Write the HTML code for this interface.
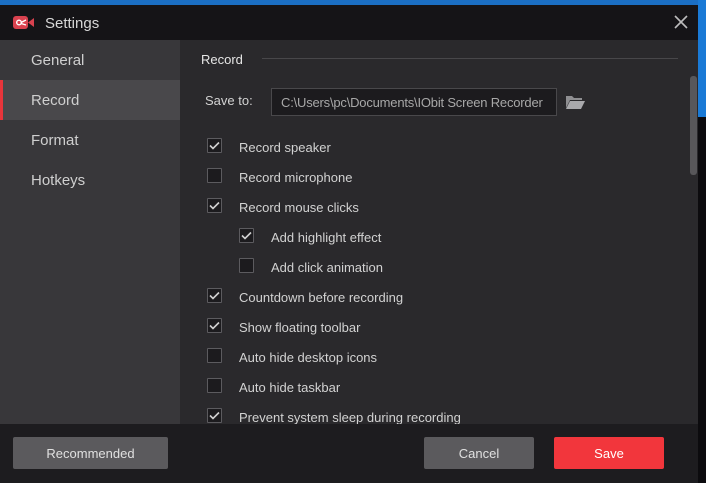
<!DOCTYPE html>
<html><head><meta charset="utf-8"><style>
*{margin:0;padding:0;box-sizing:border-box}
body{width:706px;height:483px;overflow:hidden;background:#0c0b0e;font-family:"Liberation Sans",sans-serif;position:relative}
.abs{position:absolute}
.cb{position:absolute;width:15px;height:15px;border:1px solid #5c5b5f;background:#1c1b1e;border-radius:1px}
.lbl{position:absolute;font-size:13px;color:#d2d2d2;white-space:nowrap}
.nav{position:absolute;left:31px;font-size:15px;color:#cfcfcf}
.btn{position:absolute;height:32px;top:437px;font-size:13px;color:#e0e0e0;text-align:center;line-height:33px;border-radius:2px}
</style></head><body>
<div class="abs" style="left:0;top:0;width:706px;height:5px;background:#1b6fc4"></div>
<div class="abs" style="left:698px;top:0;width:8px;height:117px;background:#1a7ad6"></div>
<div class="abs" style="left:0;top:5px;width:698px;height:35px;background:#151417"></div>
<svg class="abs" style="left:13px;top:15px" width="22" height="15" viewBox="0 0 22 15"><rect x="0" y="1" width="15" height="13" rx="3" fill="#d9424f"/><path d="M15 7.5 L21 3 L21 12 Z" fill="#d9424f"/><circle cx="6" cy="7.5" r="2.3" fill="none" stroke="#fff" stroke-width="1.4"/><path d="M8 7.5 L13 5 M8 8.5 L13 10" stroke="#fff" stroke-width="1.3"/></svg>
<div class="abs" style="left:45px;top:15px;font-size:15px;color:#d8d8d8">Settings</div>
<svg class="abs" style="left:673px;top:14px" width="16" height="16"><path d="M2 2L14 14M14 2L2 14" stroke="#bdbdbd" stroke-width="1.6"/></svg>
<div class="abs" style="left:0;top:40px;width:180px;height:384px;background:#38373a"></div>
<div class="abs" style="left:0;top:80px;width:180px;height:40px;background:#49484b"></div>
<div class="abs" style="left:0;top:80px;width:3px;height:40px;background:#e8353b"></div>
<div class="nav" style="top:52px">General</div>
<div class="nav" style="top:92px">Record</div>
<div class="nav" style="top:132px">Format</div>
<div class="nav" style="top:172px">Hotkeys</div>
<div class="abs" style="left:180px;top:40px;width:518px;height:384px;background:#2a292c"></div>
<div class="lbl" style="left:201px;top:52px;color:#e6e6e6">Record</div>
<div class="abs" style="left:262px;top:58px;width:416px;height:1px;background:#48474a"></div>
<div class="abs" style="left:690px;top:76px;width:7px;height:99px;background:#58575a;border-radius:3px"></div>
<div class="lbl" style="left:205px;top:93px">Save to:</div>
<div class="abs" style="left:271px;top:88px;width:286px;height:28px;background:#1c1b1e;border:1px solid #49484b;overflow:hidden"><div style="position:absolute;left:9px;top:6px;font-size:13px;color:#a8a8a8;white-space:nowrap;letter-spacing:-0.2px">C:\Users\pc\Documents\IObit Screen Recorder</div></div>
<svg class="abs" style="left:566px;top:94px" width="19" height="15" viewBox="0 0 19 15"><path d="M0 2h6l2 2h8v2H4L0 14Z" fill="#8f8f92"/><path d="M4 7h15l-4 8H0Z" fill="#a9a9ac"/></svg>
<div class="cb" style="left:207px;top:138px"></div><div class="lbl" style="left:239px;top:140px">Record speaker</div>
<div class="cb" style="left:207px;top:168px"></div><div class="lbl" style="left:239px;top:170px">Record microphone</div>
<div class="cb" style="left:207px;top:198px"></div><div class="lbl" style="left:239px;top:200px">Record mouse clicks</div>
<div class="cb" style="left:239px;top:228px"></div><div class="lbl" style="left:271px;top:230px">Add highlight effect</div>
<div class="cb" style="left:239px;top:258px"></div><div class="lbl" style="left:271px;top:260px">Add click animation</div>
<div class="cb" style="left:207px;top:288px"></div><div class="lbl" style="left:239px;top:290px">Countdown before recording</div>
<div class="cb" style="left:207px;top:318px"></div><div class="lbl" style="left:239px;top:320px">Show floating toolbar</div>
<div class="cb" style="left:207px;top:348px"></div><div class="lbl" style="left:239px;top:350px">Auto hide desktop icons</div>
<div class="cb" style="left:207px;top:378px"></div><div class="lbl" style="left:239px;top:380px">Auto hide taskbar</div>
<div class="cb" style="left:207px;top:408px"></div><div class="lbl" style="left:239px;top:410px">Prevent system sleep during recording</div>
<svg class="abs" style="left:0;top:0;pointer-events:none" width="706" height="483">
<g stroke="#d0d0d0" stroke-width="1.6" fill="none">
<path d="M210 145.5l3 3 6-6"/><path d="M210 205.5l3 3 6-6"/><path d="M242 235.5l3 3 6-6"/><path d="M210 295.5l3 3 6-6"/><path d="M210 325.5l3 3 6-6"/><path d="M210 415.5l3 3 6-6"/>
</g></svg>
<div class="abs" style="left:0;top:424px;width:698px;height:59px;background:#1d1c1f"></div>
<div class="btn" style="left:13px;width:155px;background:#5b5a5d">Recommended</div>
<div class="btn" style="left:424px;width:110px;background:#5b5a5d">Cancel</div>
<div class="btn" style="left:554px;width:110px;background:#f2363c;color:#fff">Save</div>
</body></html>
